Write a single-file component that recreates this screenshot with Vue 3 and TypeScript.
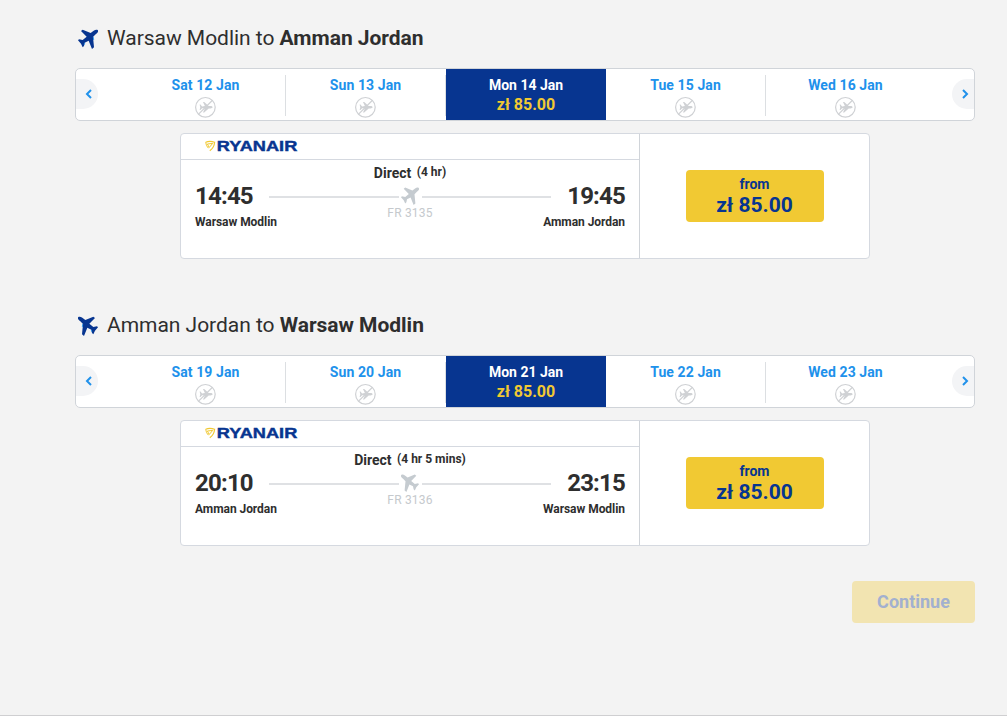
<script setup lang="ts">
interface Day {
  label: string
  price?: string
}

interface Flight {
  from: string
  to: string
  inbound: boolean
  days: Day[]
  departs: string
  arrives: string
  duration: string
  number: string
  price: string
}

// Plane climbing to the upper right, on a 60-unit grid.
const climbPath =
  'M59 3C63 7 58 12 53 16L45 24L48 55L42 60L32 35L20 41L18 51L14 55L9 44L0 34L3 31L14 33L26 23L9 6L14 2L38 12L47 5C51 2 56 1 59 3Z'

// Level plane seen from above, nose up.
const planePath =
  'M0 -11.8C1.3 -11.8 2 -9.8 2.1 -8V-4.8L9.5 3.2V5.4L2.2 2L1.5 7L4.8 9.8V11.4L0 10.2L-4.8 11.4V9.8L-1.5 7L-2.2 2L-9.5 5.4V3.2L-2.1 -4.8V-8C-2 -9.8 -1.3 -11.8 0 -11.8Z'

const makeDays = (start: number): Day[] =>
  ['Sat', 'Sun', 'Mon', 'Tue', 'Wed'].map((name, i) => ({
    label: `${name} ${start + i} Jan`,
    price: name === 'Mon' ? 'zł 85.00' : undefined,
  }))

const flights: Flight[] = [
  {
    from: 'Warsaw Modlin',
    to: 'Amman Jordan',
    inbound: false,
    days: makeDays(12),
    departs: '14:45',
    arrives: '19:45',
    duration: '(4 hr)',
    number: 'FR 3135',
    price: 'zł 85.00',
  },
  {
    from: 'Amman Jordan',
    to: 'Warsaw Modlin',
    inbound: true,
    days: makeDays(19),
    departs: '20:10',
    arrives: '23:15',
    duration: '(4 hr 5 mins)',
    number: 'FR 3136',
    price: 'zł 85.00',
  },
]
</script>

<template>
  <main class="page">
    <section v-for="flight in flights" :key="flight.number" class="journey">
      <h2 class="title">
        <svg class="title-plane" :class="{ flip: flight.inbound }" viewBox="0 0 60 60">
          <path :d="climbPath" fill="#073590" />
          <path d="M46 24L47 33M20 42L19 47" stroke="#2091eb" stroke-width="2.5" />
        </svg>
        <span>{{ flight.from }} to <b>{{ flight.to }}</b></span>
      </h2>

      <div class="carousel">
        <button class="arrow prev" aria-label="Previous">
          <svg viewBox="0 0 8 10"><path d="M6 1L2 5L6 9" /></svg>
        </button>
        <div class="days">
          <div v-for="day in flight.days" :key="day.label" class="day" :class="{ active: day.price }">
            <span class="date">{{ day.label }}</span>
            <span v-if="day.price" class="fare">{{ day.price }}</span>
            <svg v-else class="none" viewBox="0 0 22 22">
              <circle cx="11.4" cy="11.3" r="9.8" />
              <path class="slash" d="M4.6 18.1L18.2 4.5" />
              <path class="body" :d="planePath" transform="translate(12 11.3) rotate(90) scale(.56)" />
            </svg>
          </div>
        </div>
        <button class="arrow next" aria-label="Next">
          <svg viewBox="0 0 8 10"><path d="M2 1L6 5L2 9" /></svg>
        </button>
      </div>

      <article class="card">
        <div class="info">
          <header class="brand">
            <svg width="110" height="24" viewBox="0 -5 110 24">
              <g fill="none" stroke="#f1c933" stroke-width="1">
                <path d="M.7 2.2Q4.8 .4 9.6 2.2Q9.2 7.5 4.8 10.8" stroke-width="1.2" />
                <path d="M.7 2.2Q1 6 3.4 8.2M2.4 4L7.7 3.4L4.2 7.5Z" />
              </g>
              <text x="11.8" y="11" textLength="80.5" lengthAdjust="spacingAndGlyphs">RYANAIR</text>
            </svg>
          </header>
          <div class="route">
            <div class="end">
              <div class="time">{{ flight.departs }}</div>
              <div class="city">{{ flight.from }}</div>
            </div>
            <div class="middle">
              <div class="direct">Direct <span>{{ flight.duration }}</span></div>
              <div class="track">
                <i />
                <svg :class="{ flip: flight.inbound }" viewBox="0 0 60 60">
                  <path :d="climbPath" fill="#c5cbd0" />
                </svg>
                <i />
              </div>
              <div class="number">{{ flight.number }}</div>
            </div>
            <div class="end right">
              <div class="time">{{ flight.arrives }}</div>
              <div class="city">{{ flight.to }}</div>
            </div>
          </div>
        </div>
        <div class="buy">
          <button class="price">
            <span class="from">from</span>
            <span class="amount">{{ flight.price }}</span>
          </button>
        </div>
      </article>
    </section>

    <div class="actions"><button class="continue">Continue</button></div>
  </main>
</template>

<style>
body {
  margin: 0;
  background: #fff;
  overflow: hidden;
}
</style>

<style scoped>
* {
  box-sizing: border-box;
}
.page {
  height: 716px;
  padding: 24px 32px 0 75px;
  background: #f3f3f3;
  border-bottom: 1px solid #cfcfd1;
  font-family: Roboto, sans-serif;
  color: #2e2e2e;
}
button {
  border: 0;
  padding: 0;
  font-family: inherit;
}
.journey {
  height: 287px;
}
.title {
  display: flex;
  align-items: center;
  height: 28px;
  margin: 0 0 16px;
  font-size: 21px;
  font-weight: 400;
  letter-spacing: -0.03px;
  white-space: nowrap;
}
.title b {
  font-weight: 700;
}
.title-plane {
  width: 20px;
  height: 20px;
  margin: 2px 9px 0 3px;
}
.flip {
  transform: scaleX(-1);
}
.carousel {
  display: flex;
  justify-content: space-between;
  height: 53px;
  border: 1px solid #d0d4d9;
  border-radius: 5px;
  background: #fff;
}
.arrow {
  display: flex;
  align-items: center;
  width: 22px;
  height: 30px;
  margin-top: 10px;
  background: #f3f4f6;
}
.arrow svg {
  width: 8px;
  height: 10px;
  fill: none;
  stroke: #2091eb;
  stroke-width: 2;
}
.prev {
  border-radius: 0 15px 15px 0;
  padding-left: 9px;
}
.next {
  border-radius: 15px 0 0 15px;
  padding-left: 9px;
}
.days {
  display: flex;
  margin-left: 28px;
  flex: 1;
}
.day {
  display: flex;
  flex-direction: column;
  align-items: center;
  width: 160px;
  height: 51px;
  padding: 8px 1px 0 0;
  line-height: 17px;
  background: linear-gradient(#dcdfe2, #dcdfe2) right 6px / 1px 41px no-repeat;
}
.day:last-child {
  background: none;
}
.date {
  font-size: 14px;
  font-weight: 700;
  letter-spacing: 0.1px;
  color: #2091eb;
}
.day.active {
  padding-right: 0;
  background: #073590;
}
.active .date {
  color: #fff;
  letter-spacing: 0;
}
.fare {
  margin-top: 2px;
  font-size: 16px;
  font-weight: 700;
  color: #f1c933;
}
.none {
  width: 22px;
  height: 22px;
  margin: 2px 1px 0 0;
  fill: none;
  stroke: #cfd1d4;
  stroke-width: 1.2;
}
.none .body {
  fill: #cfd1d4;
  stroke: none;
}
.card {
  display: flex;
  width: 690px;
  height: 126px;
  margin: 12px 0 0 105px;
  border: 1px solid #d5d9e0;
  border-radius: 4px;
  background: #fff;
}
.info {
  width: 459px;
  border-right: 1px solid #d0d4d9;
}
.brand {
  height: 26px;
  padding: 1px 0 0 24px;
  border-bottom: 1px solid #d5d9e0;
}
.brand svg {
  display: block;
}
.brand text {
  font: 700 14px 'Liberation Sans', sans-serif;
  fill: #073590;
  stroke: #073590;
  stroke-width: 0.4;
}
.route {
  display: flex;
  justify-content: space-between;
  padding: 0 14px;
}
.end {
  width: 74px;
  padding-top: 22px;
  white-space: nowrap;
}
.right {
  display: flex;
  flex-direction: column;
  align-items: flex-end;
}
.time {
  font-size: 24px;
  line-height: 28px;
  font-weight: 700;
  letter-spacing: -0.8px;
}
.city {
  margin-top: 5px;
  font-size: 12px;
  line-height: 14px;
  font-weight: 700;
  letter-spacing: -0.05px;
}
.middle {
  width: 282px;
  text-align: center;
}
.direct {
  padding-top: 5px;
  height: 26px;
  font-size: 14px;
  line-height: 17px;
  font-weight: 700;
}
.direct span {
  margin-left: 2px;
  font-size: 12px;
  font-weight: 700;
  vertical-align: 2px;
  line-height: 1;
}
.track {
  display: flex;
  align-items: center;
  justify-content: center;
  height: 22px;
}
.track i {
  flex: 1;
  height: 2px;
  background: #dfe1e4;
}
.track svg {
  width: 18px;
  height: 18px;
  margin: -3px 3px 0 2px;
}
.number {
  margin-top: -2px;
  font-size: 12px;
  line-height: 14px;
  letter-spacing: 0.2px;
  color: #c5c9cd;
}
.buy {
  flex: 1;
  display: flex;
  justify-content: center;
  padding-top: 36px;
}
.price {
  display: flex;
  flex-direction: column;
  align-items: center;
  width: 138px;
  height: 52px;
  padding-top: 6px;
  border-radius: 4px;
  background: #f1c933;
  color: #073590;
}
.from {
  font-size: 14px;
  line-height: 17px;
  font-weight: 700;
}
.amount {
  font-size: 21px;
  line-height: 24px;
  font-weight: 700;
}
.actions {
  display: flex;
  justify-content: flex-end;
  margin-top: -17px;
}
.continue {
  width: 123px;
  height: 42px;
  padding-bottom: 1px;
  border-radius: 4px;
  background: #f2e4b1;
  color: #a2b0cf;
  font-size: 18px;
  font-weight: 700;
}
</style>
